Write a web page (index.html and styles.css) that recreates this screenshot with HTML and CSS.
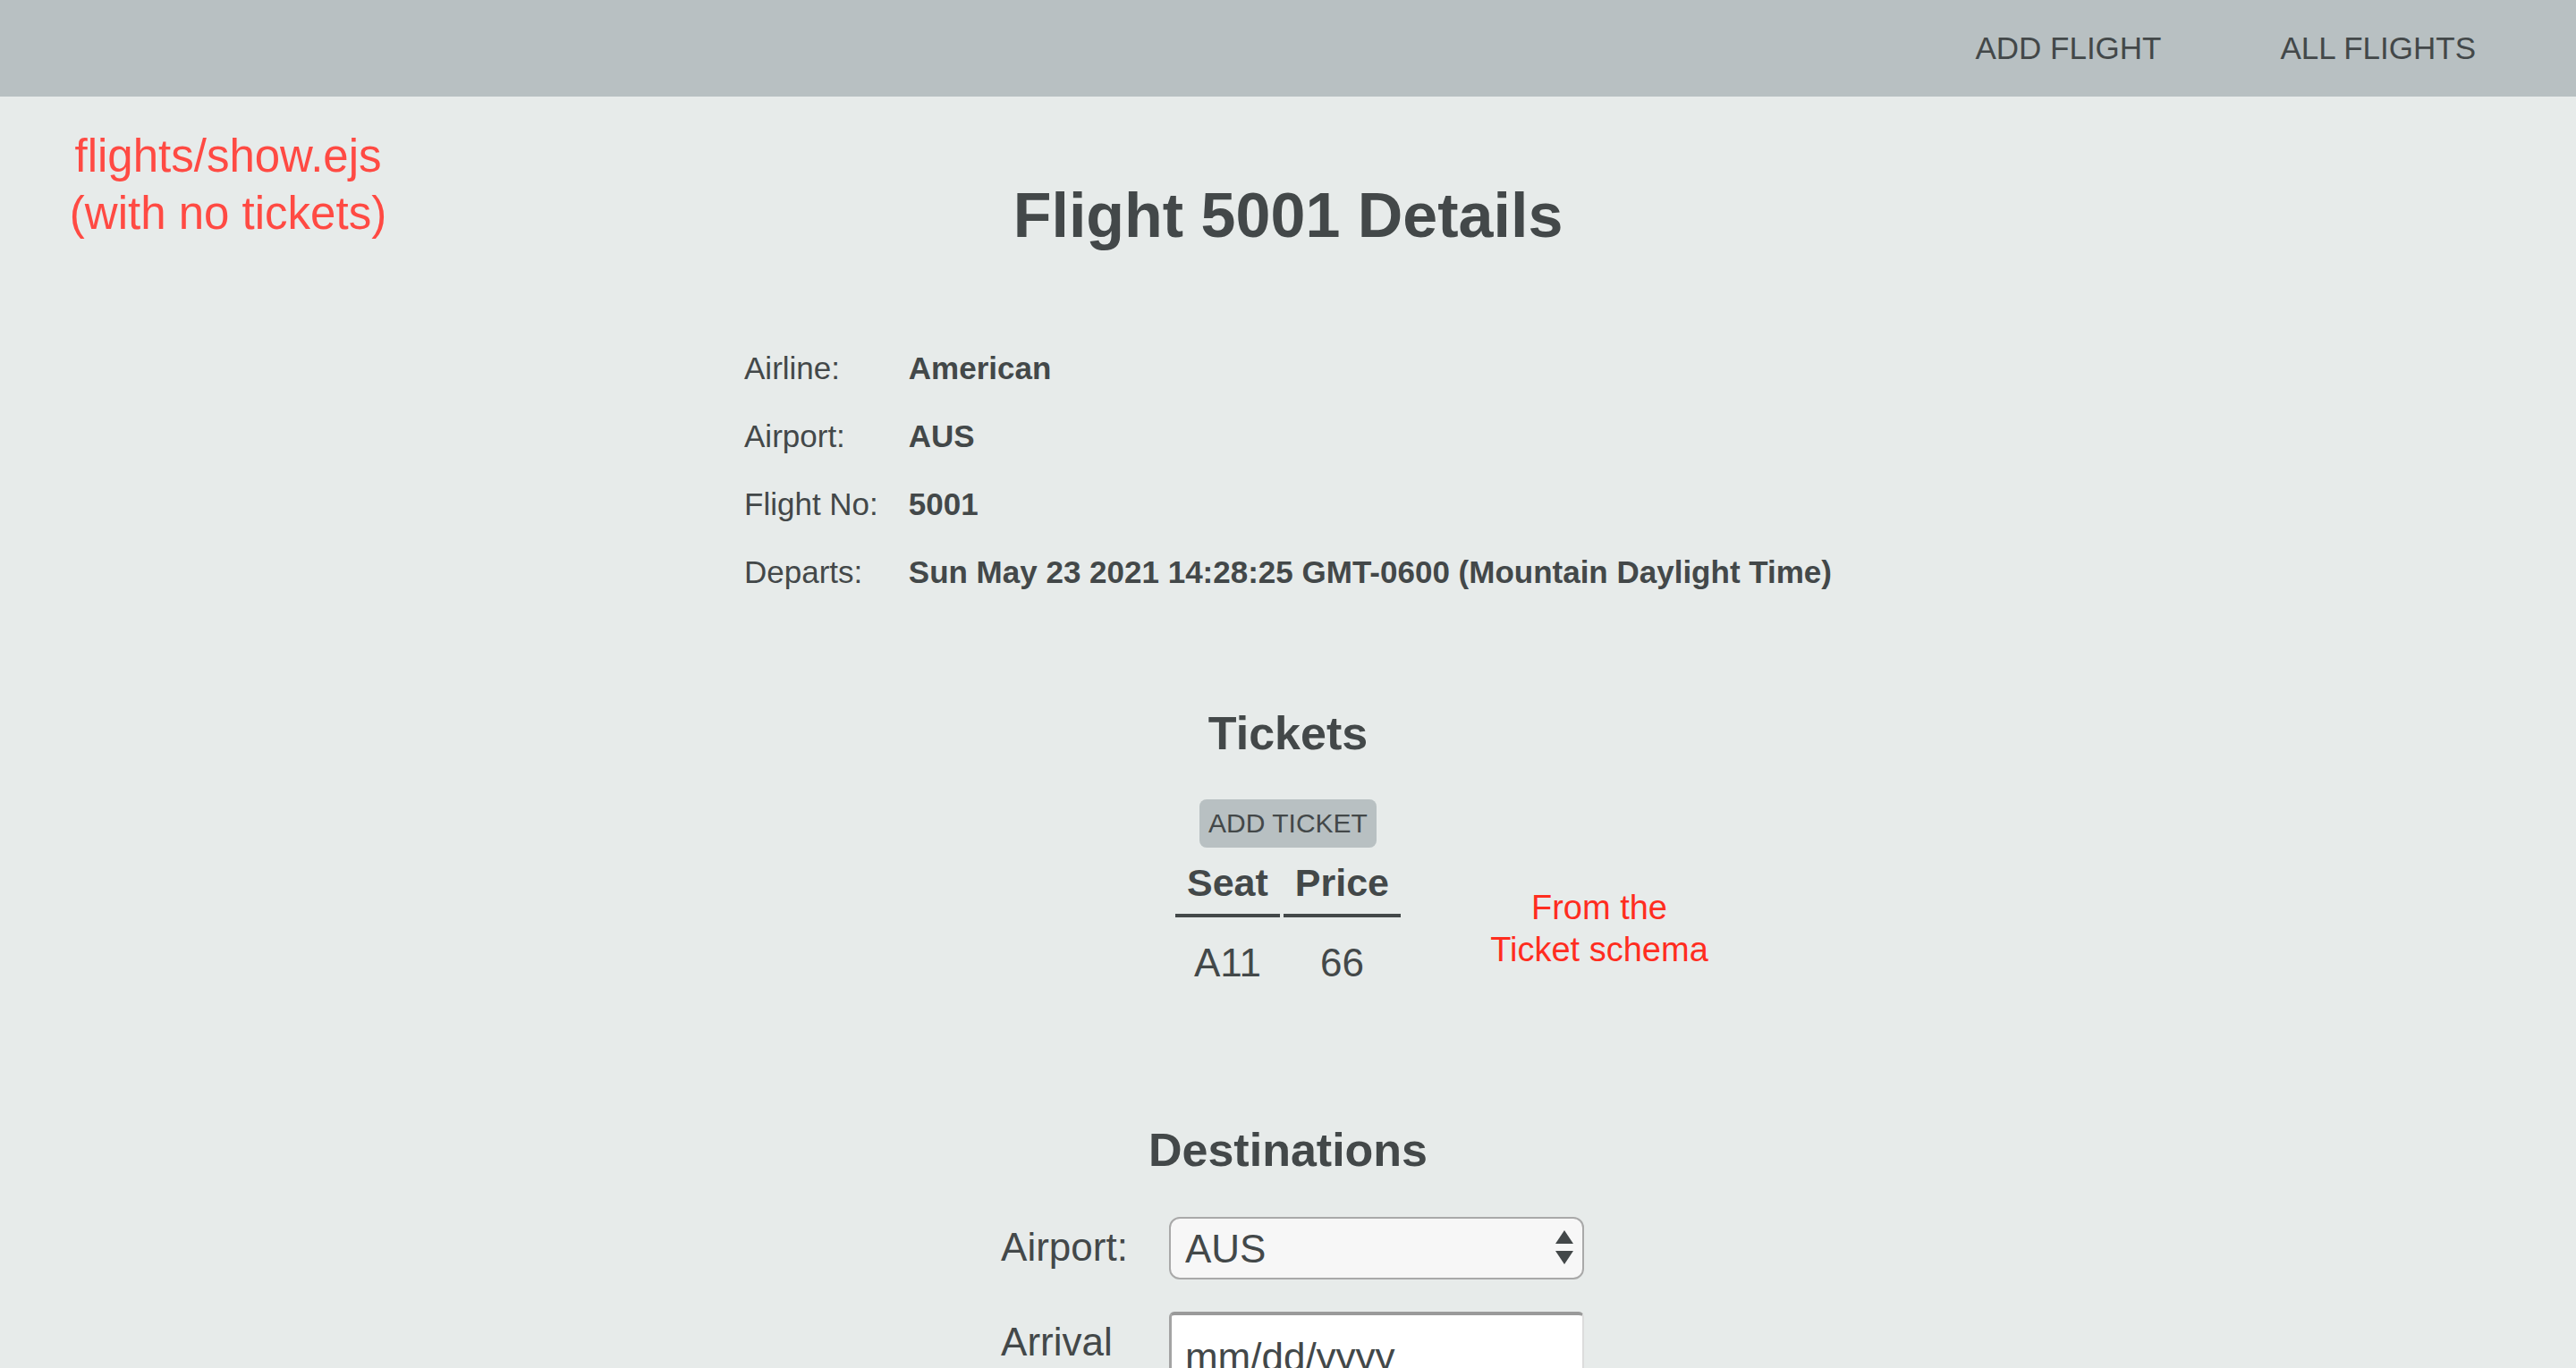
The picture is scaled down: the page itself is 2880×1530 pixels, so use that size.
FILE: index.html
```html
<!DOCTYPE html>
<html lang="en">
<head>
  <meta charset="UTF-8">
  <title>Flight 5001 Details</title>
  <link rel="stylesheet" href="styles.css">
</head>
<body>
  <nav class="top-nav">
    <a href="#" class="nav-link">ADD FLIGHT</a>
    <a href="#" class="nav-link">ALL FLIGHTS</a>
  </nav>

  <div class="note note-page">flights/show.ejs<br>(with no tickets)</div>

  <main class="page">
    <h1 class="page-title">Flight 5001 Details</h1>

    <div class="details">
      <div class="detail-label">Airline:</div>
      <div class="detail-value">American</div>
      <div class="detail-label">Airport:</div>
      <div class="detail-value">AUS</div>
      <div class="detail-label">Flight No:</div>
      <div class="detail-value">5001</div>
      <div class="detail-label">Departs:</div>
      <div class="detail-value">Sun May 23 2021 14:28:25 GMT-0600 (Mountain Daylight Time)</div>
    </div>

    <section class="tickets">
      <h2 class="section-title">Tickets</h2>
      <button class="add-ticket">ADD TICKET</button>
      <table class="ticket-table">
        <thead>
          <tr><th>Seat</th><th>Price</th></tr>
        </thead>
        <tbody>
          <tr><td>A11</td><td>66</td></tr>
        </tbody>
      </table>
      <div class="note note-schema">From the<br>Ticket schema</div>
    </section>

    <section class="destinations">
      <h2 class="section-title">Destinations</h2>
      <form class="dest-form">
        <label class="form-label" for="airport">Airport:</label>
        <div class="select-wrap">
          <select id="airport" class="form-select">
            <option>AUS</option>
            <option>DFW</option>
            <option>DEN</option>
            <option>LAX</option>
            <option>SAN</option>
          </select>
          <svg class="select-arrows" width="20" height="38" viewBox="0 0 20 38">
            <polygon points="0,15 10,0 20,15" fill="#434849"></polygon>
            <polygon points="0,23 20,23 10,38" fill="#434849"></polygon>
          </svg>
        </div>
        <label class="form-label" for="arrival">Arrival</label>
        <input id="arrival" class="form-date" type="text" placeholder="mm/dd/yyyy">
      </form>
    </section>
  </main>
</body>
</html>
```

FILE: styles.css
```css
* {
  box-sizing: border-box;
}

:root {
  --bg-page: #e7ebea;
  --bg-bar: #b8c0c2;
  --text: #434849;
  --note-red: #ff4a43;
  --note-red-strong: #ff2d1f;
}

body {
  margin: 0;
  font-family: "Liberation Sans", Arial, sans-serif;
  background-color: var(--bg-page);
  color: var(--text);
  position: relative;
  overflow: hidden;
}

/* top bar */
.top-nav {
  height: 108px;
  background-color: var(--bg-bar);
  display: flex;
  justify-content: flex-end;
  align-items: center;
  gap: 133px;
  padding-right: 112px;
}

.nav-link {
  color: var(--text);
  text-decoration: none;
  font-size: 35px;
}

/* red annotations drawn over the screenshot */
.note {
  position: absolute;
  text-align: center;
}

.note-page {
  top: 143px;
  left: 0;
  width: 510px;
  font-size: 51px;
  line-height: 64px;
  color: var(--note-red);
}

.note-schema {
  top: 992px;
  left: 1588px;
  width: 400px;
  font-size: 38px;
  line-height: 47px;
  color: var(--note-red-strong);
}

.page {
  text-align: center;
}

.page-title {
  margin: 98px 0 0;
  font-size: 70px;
  line-height: 70px;
  font-weight: 700;
}

/* flight info */
.details {
  display: grid;
  grid-template-columns: auto auto;
  column-gap: 34px;
  width: fit-content;
  margin: 98px auto 0;
  text-align: left;
  font-size: 35px;
  line-height: 76px;
}

.detail-value {
  font-weight: 700;
}

.section-title {
  margin: 0;
  font-size: 52px;
  line-height: 52px;
  font-weight: 700;
}

/* tickets */
.tickets {
  display: flex;
  flex-direction: column;
  align-items: center;
  margin-top: 116px;
}

.add-ticket {
  margin-top: 48px;
  height: 54px;
  padding: 0 10px;
  border: none;
  border-radius: 8px;
  background-color: var(--bg-bar);
  color: var(--text);
  font-family: inherit;
  font-size: 30px;
  line-height: 54px;
}

.ticket-table {
  margin-top: 15px;
  border-collapse: separate;
  border-spacing: 4px 0;
}

.ticket-table th {
  padding: 0 13px 11px;
  font-size: 43px;
  line-height: 48px;
  border-bottom: 4px solid var(--text);
}

.ticket-table td {
  padding: 26px 0 0;
  font-size: 44px;
  line-height: 50px;
}

/* destinations */
.destinations {
  margin-top: 158px;
}

.dest-form {
  display: grid;
  grid-template-columns: auto 464px;
  column-gap: 46px;
  row-gap: 36px;
  align-items: start;
  width: fit-content;
  margin: 49px auto 0;
  padding-left: 10px;
  text-align: left;
}

.form-label {
  padding-top: 9px;
  font-size: 44px;
}

.select-wrap {
  position: relative;
}

.form-select {
  appearance: none;
  -webkit-appearance: none;
  width: 100%;
  height: 70px;
  padding: 0 50px 0 16px;
  border: 2px solid #a9a9a9;
  border-radius: 12px;
  background-color: #f7f7f7;
  color: var(--text);
  font-family: inherit;
  font-size: 44px;
}

.select-arrows {
  position: absolute;
  right: 12px;
  top: 15px;
  pointer-events: none;
}

.form-date {
  width: 100%;
  height: 100px;
  padding: 0 0 0 15px;
  border-top: 4px solid #9a9a9a;
  border-left: 3px solid #a3a3a3;
  border-right: 2px solid #dcdcdc;
  border-bottom: 2px solid #dcdcdc;
  border-radius: 6px;
  background-color: #fff;
  color: var(--text);
  font-family: inherit;
  font-size: 44px;
  outline: none;
}

.form-date::placeholder {
  color: var(--text);
  opacity: 1;
}
```
